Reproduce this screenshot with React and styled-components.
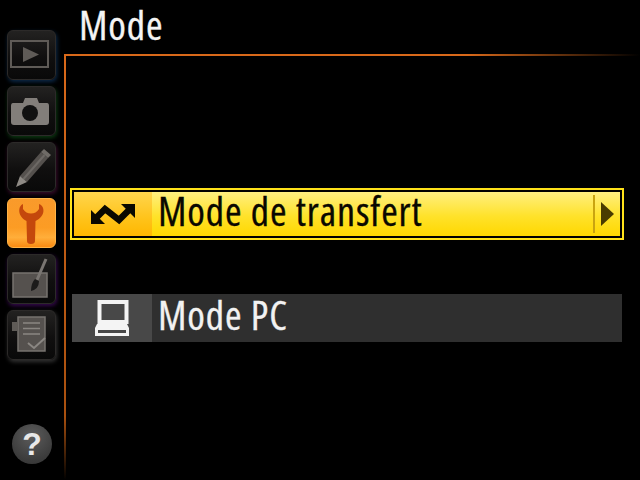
import React from 'react';
import styled, { createGlobalStyle } from 'styled-components';

const Global = createGlobalStyle`
  html, body {
    margin: 0;
    padding: 0;
    background: #000;
  }
`;

const Screen = styled.div`
  width: 640px;
  height: 480px;
  display: flex;
  background: #000;
  overflow: hidden;
  font-family: 'Open Sans', 'Liberation Sans', sans-serif;
  font-stretch: 75%;
  letter-spacing: 0.9px;
  -webkit-text-stroke: 0.3px currentColor;
`;

const Sidebar = styled.nav`
  width: 64px;
  flex: none;
  display: flex;
  flex-direction: column;
  gap: 6px;
  padding: 30px 0 16px 7px;
  box-sizing: border-box;
`;

const Tab = styled.div`
  width: 49px;
  height: 50px;
  box-sizing: border-box;
  border-radius: 6px;
  border: 1px solid ${(p) => (p.$active ? '#ffb347' : '#2c2a29')};
  background: ${(p) =>
    p.$active
      ? 'linear-gradient(#f99a2b, #fc9c24 60%, #ffae3a 80%, #f98a12)'
      : 'linear-gradient(#232221, #100f0f 55%, #090909)'};
  box-shadow: ${(p) => (p.$glow ? `1px 2px 4px ${p.$glow}` : 'none')};
  display: flex;
  align-items: center;
  justify-content: center;
`;

const TabIcon = styled.svg`
  width: 47px;
  height: 48px;
  display: block;
`;

const HelpButton = styled.div`
  margin-top: auto;
  margin-left: 5px;
  width: 40px;
  height: 40px;
  border-radius: 50%;
  background: radial-gradient(circle at 50% 30%, #5c5c5c, #3c3c3c 70%, #333);
  color: #e8e8e8;
  font: bold 32px 'Liberation Sans', sans-serif;
  line-height: 40px;
  letter-spacing: 0;
  text-align: center;
  -webkit-text-stroke: 0;
`;

const Main = styled.main`
  flex: 1;
  display: flex;
  flex-direction: column;
  min-width: 0;
`;

const Title = styled.h1`
  height: 54px;
  flex: none;
  margin: 0;
  padding-left: 15px;
  box-sizing: border-box;
  font-weight: normal;
  font-size: 40px;
  line-height: 50px;
  color: #f4f4f4;
`;

const Frame = styled.section`
  flex: 1;
  display: flex;
  flex-direction: column;
  gap: 54px;
  padding: 134px 16px 0 6px;
  background:
    linear-gradient(90deg, #d9691a, #d9691a 70%, #000) top left / 100% 2px no-repeat,
    linear-gradient(#d9691a, #a8500f 85%, #000) top left / 2px 100% no-repeat;
`;

const SelectedOutline = styled.div`
  border: 2px solid #ffe21a;
  background: #000;
  padding: 2px;
`;

const Row = styled.div`
  height: 44px;
  display: flex;
  align-items: stretch;
  color: ${(p) => (p.$selected ? '#0a0800' : '#f2f2f2')};
  background: ${(p) =>
    p.$selected ? 'linear-gradient(#ffef80, #ffe22a 55%, #ffd800)' : '#2f2f2f'};
  ${(p) => !p.$selected && 'height: 48px; margin: 0 2px;'}
`;

const IconCell = styled.div`
  width: ${(p) => (p.$selected ? 78 : 80)}px;
  flex: none;
  display: flex;
  align-items: center;
  justify-content: center;
  background: ${(p) =>
    p.$selected ? 'linear-gradient(#ffd54d, #ffc31a 60%, #ffb700)' : '#484848'};
`;

const Label = styled.div`
  flex: 1;
  padding-left: 6px;
  font-size: 40px;
  line-height: ${(p) => (p.$selected ? 38 : 42)}px;
  white-space: nowrap;
`;

const ArrowCell = styled.div`
  width: 25px;
  flex: none;
  margin: 3px 0;
  border-left: 2px solid #c9a410;
  display: flex;
  align-items: center;
  justify-content: center;
`;

const Arrow = styled.div`
  width: 0;
  height: 0;
  border-style: solid;
  border-width: 12px 0 12px 13px;
  border-color: transparent transparent transparent #4a3b00;
`;

const GREY = '#5f5b57';
const LIGHT = '#8a8682';

const icons = {
  play: (
    <>
      <rect x="5" y="11" width="37" height="26" fill="none" stroke={GREY} strokeWidth="2" />
      <polygon points="17,17 33,24.5 17,32" fill={GREY} />
    </>
  ),
  camera: (
    <>
      <path
        d="M7 17 Q5 17 5 20 L5 36 Q5 39 8 39 L40 39 Q43 39 43 36 L43 20 Q43 17 41 17 L33 17 L31 12 L19 12 L17 17 Z"
        fill="#827e7a"
      />
      <circle cx="24" cy="27" r="8" fill="#111" />
    </>
  ),
  pencil: (
    <>
      <polygon points="14,34 35,10 42,16 21,40" fill="#55514e" />
      <polyline points="17.5,37 38.5,13" fill="none" stroke="#6d6965" strokeWidth="2" />
      <polygon points="14,34 21,40 10,45" fill="#8e8a85" />
      <polygon points="35,10 38,7 45,13 42,16" fill="#6f6b67" />
    </>
  ),
  wrench: (
    <path
      d="M17 6 C12 8 11 18 20.5 23 L21 43 Q21 46 25 46 Q29 46 29 43 L29.5 23 C40 18 39 8 33 6 L33 11 Q30 15.5 25 15.5 Q20 15.5 17 11 Z"
      fill="#c4480c"
    />
  ),
  brush: (
    <>
      <rect x="7" y="19" width="34" height="24" fill="#55514e" stroke="#77736f" strokeWidth="1.5" />
      <line x1="40" y1="5" x2="31" y2="26" stroke="#7a7672" strokeWidth="3" />
      <path d="M29 25 L33 27 Q33 35 25 37 Q25 29 29 25 Z" fill="#1c1b1a" />
    </>
  ),
  recent: (
    <>
      <rect x="12" y="7" width="27" height="34" fill="#55514e" stroke="#77736f" strokeWidth="1.5" />
      <rect x="6" y="12" width="6" height="9" fill={GREY} />
      <path d="M17 13 H34 M17 18.5 H34 M17 24 H34" stroke={LIGHT} strokeWidth="1.5" />
      <path d="M22 33 L28 38 L39 28" fill="none" stroke={LIGHT} strokeWidth="2" />
    </>
  ),
};

const tabs = [
  { id: 'play', glow: '#0c2a4a' },
  { id: 'camera', glow: '#0c3a12' },
  { id: 'pencil', glow: '#3a0c2c' },
  { id: 'wrench', active: true },
  { id: 'brush', glow: '#36094e' },
  { id: 'recent', glow: '#333' },
];

function TransferIcon() {
  return (
    <svg width="44" height="22" viewBox="0 0 44 22">
      <polyline points="5,15 14,6 28,17 39,6" fill="none" stroke="#0a0800" strokeWidth="6.5" />
      <polygon points="0,7 0,21 14,21" fill="#0a0800" />
      <polygon points="30,1 44,1 44,15" fill="#0a0800" />
    </svg>
  );
}

function LaptopIcon() {
  return (
    <svg width="36" height="36" viewBox="0 0 36 36">
      <rect x="5.5" y="2" width="27" height="20" fill="none" stroke="#f4f4f4" strokeWidth="4" />
      <path d="M3 24 H33 L35 28 V36 H1 V28 Z M4 30 V33 H32 V30 Z" fill="#f4f4f4" fillRule="evenodd" />
    </svg>
  );
}

export default function App() {
  return (
    <Screen>
      <Global />
      <Sidebar>
        {tabs.map((tab) => (
          <Tab key={tab.id} $active={tab.active} $glow={tab.glow}>
            <TabIcon viewBox="2 1 47 48">{icons[tab.id]}</TabIcon>
          </Tab>
        ))}
        <HelpButton>?</HelpButton>
      </Sidebar>
      <Main>
        <Title>Mode</Title>
        <Frame>
          <SelectedOutline>
            <Row $selected>
              <IconCell $selected>
                <TransferIcon />
              </IconCell>
              <Label $selected>Mode de transfert</Label>
              <ArrowCell>
                <Arrow />
              </ArrowCell>
            </Row>
          </SelectedOutline>
          <Row>
            <IconCell>
              <LaptopIcon />
            </IconCell>
            <Label>Mode PC</Label>
          </Row>
        </Frame>
      </Main>
    </Screen>
  );
}
